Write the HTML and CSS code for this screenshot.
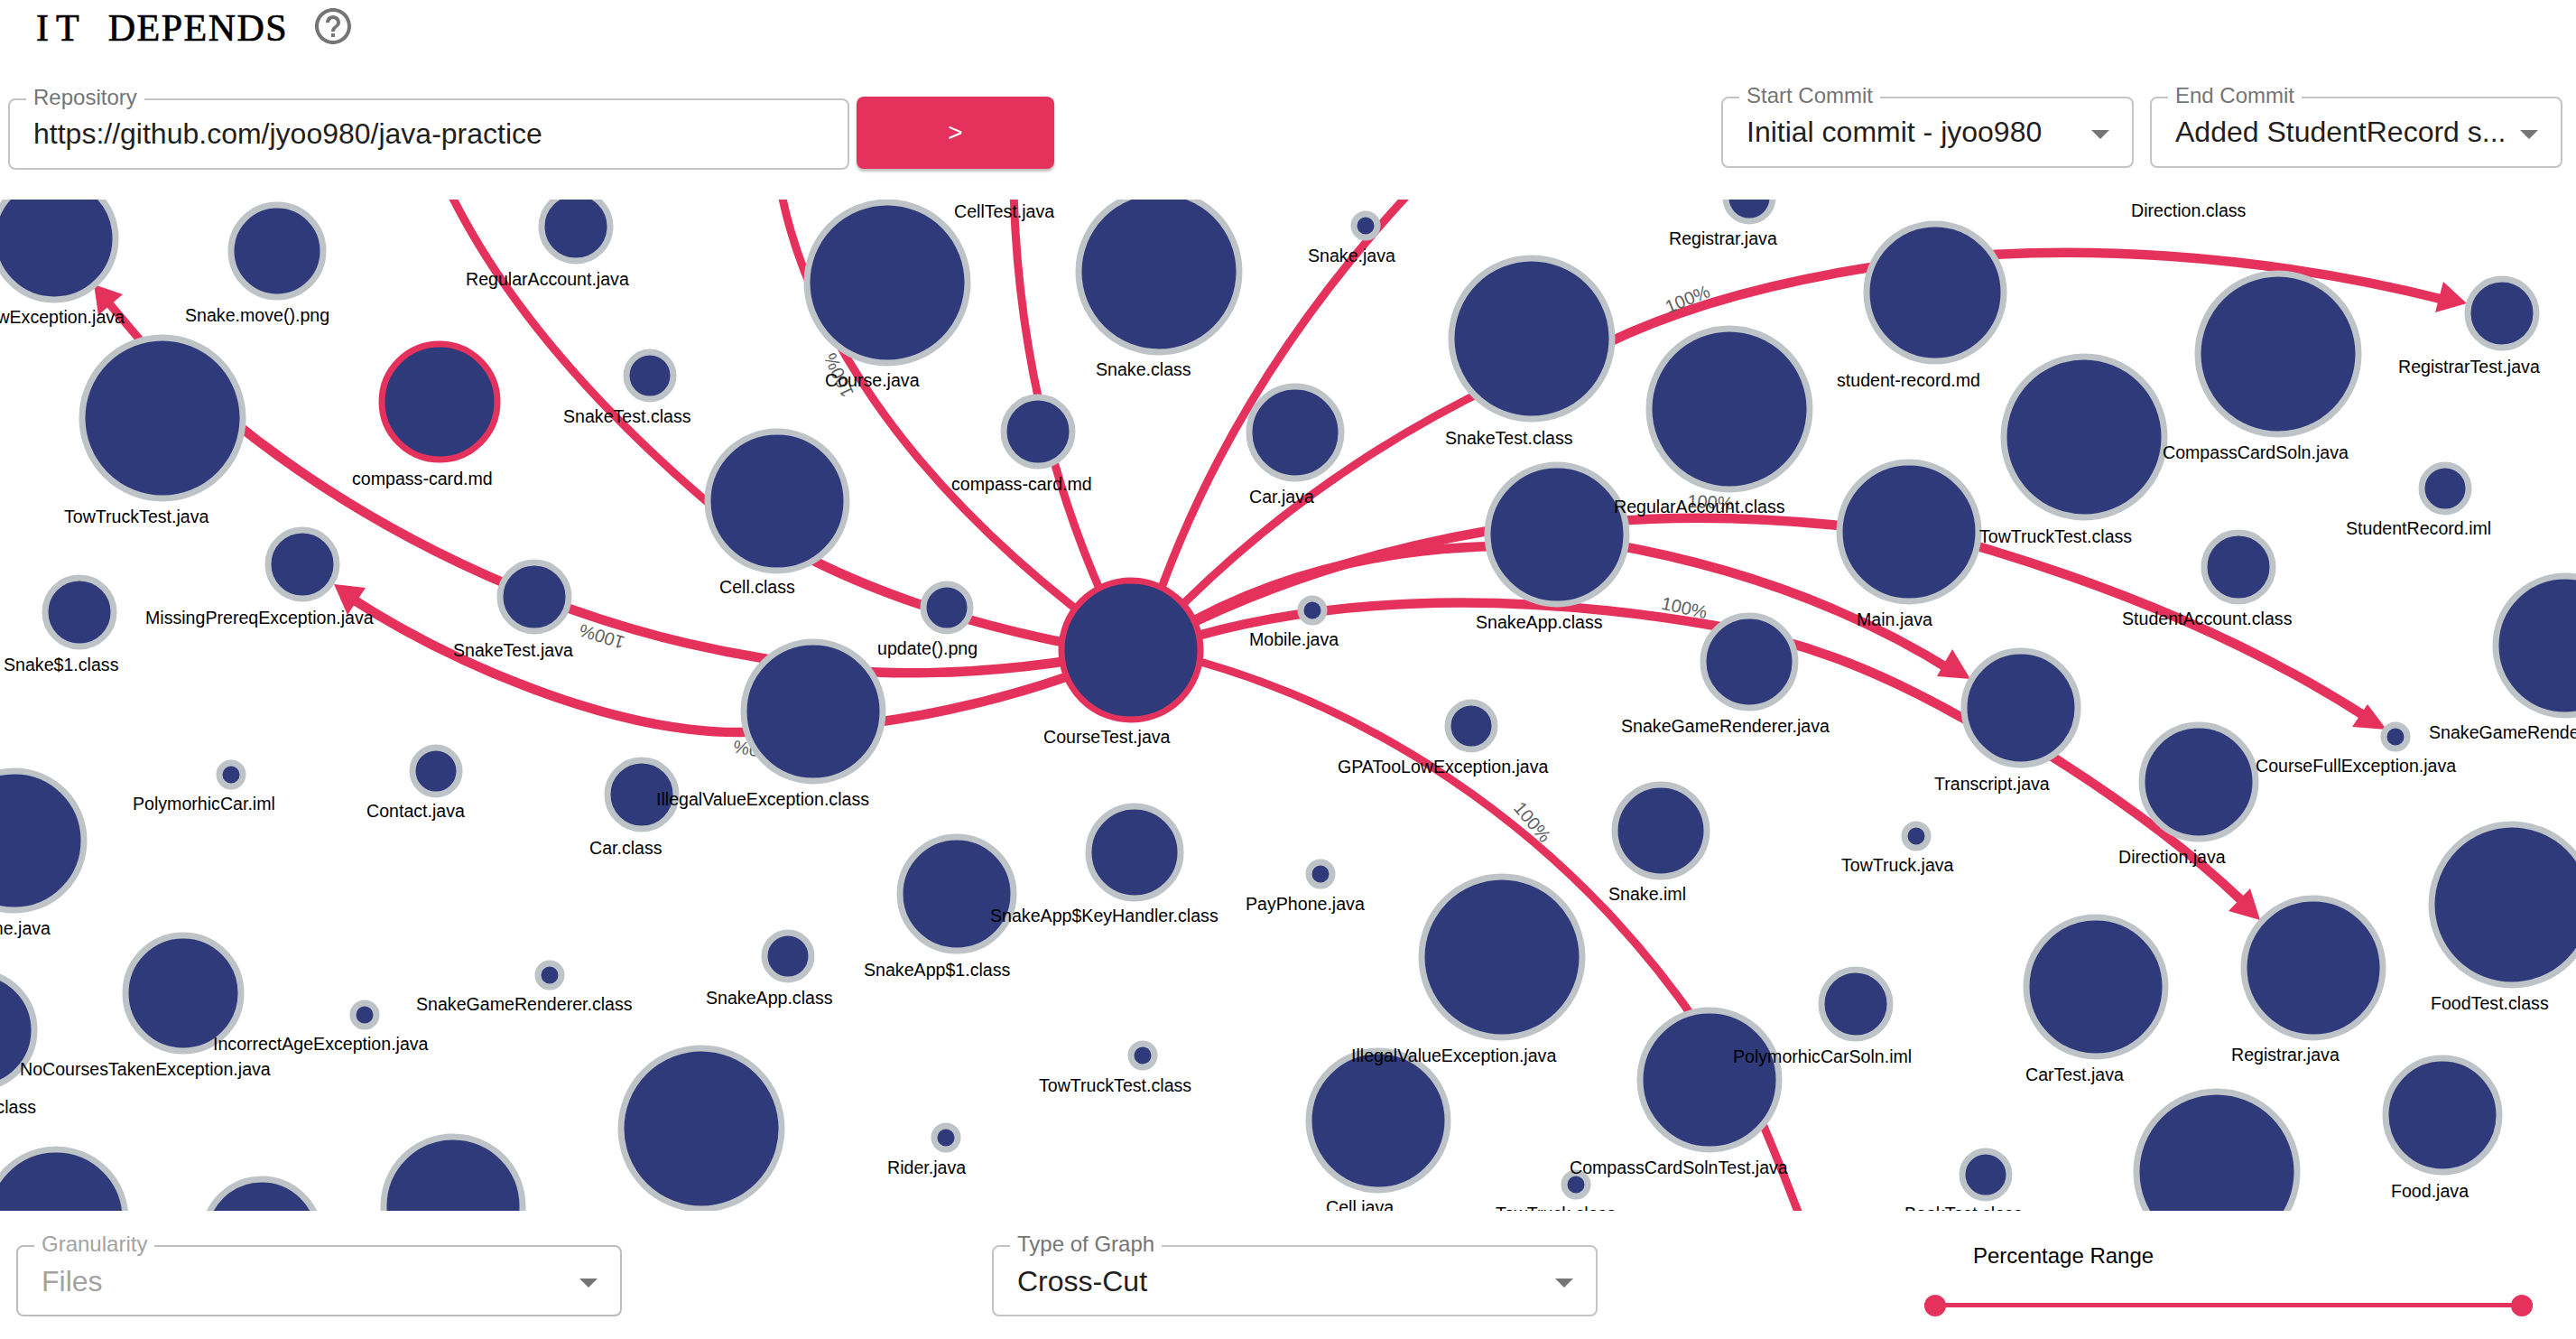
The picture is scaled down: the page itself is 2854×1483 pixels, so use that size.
FILE: index.html
```html
<!DOCTYPE html>
<html lang="en">

<head>
    <meta charset="UTF-8">
    <meta name="viewport" content="width=device-width, initial-scale=1.0">
    <title>It Depends</title>

    <link rel="stylesheet" href="styles.css">
</head>

<body>

    <div class="title-row">
        <h1 class="title"><span class="title-short">IT</span> DEPENDS</h1>
        <svg class="help-icon" viewBox="0 0 24 24">
            <path d="M11 18h2v-2h-2v2zm1-16C6.48 2 2 6.48 2 12s4.48 10 10 10 10-4.48 10-10S17.52 2 12 2zm0 18c-4.41 0-8-3.59-8-8s3.59-8 8-8 8 3.59 8 8-3.59 8-8 8zm0-14c-2.21 0-4 1.79-4 4h2c0-1.1.9-2 2-2s2 .9 2 2c0 2-3 1.75-3 5h2c0-2.25 3-2.5 3-5 0-2.21-1.79-4-4-4z"></path>
        </svg>
    </div>

    <div class="controls">
        <div class="repo-group">
            <div class="field repo-field">
                <label class="field-label">Repository</label>
                <input class="repo-input" type="text" value="https://github.com/jyoo980/java-practice">
            </div>
            <button class="go-button">&gt;</button>
        </div>
        <div class="commit-group">
            <div class="field commit-field">
                <label class="field-label">Start Commit</label>
                <span class="field-value">Initial commit - jyoo980</span>
                <span class="caret"></span>
            </div>
            <div class="field commit-field">
                <label class="field-label">End Commit</label>
                <span class="field-value">Added StudentRecord s...</span>
                <span class="caret"></span>
            </div>
        </div>
    </div>

    <div class="graph">
        <svg class="graph-svg" viewBox="0 221 2854 1120">
            <!-- links -->
            <path class="link" d="M175,400 L120,335"></path>
            <path class="link thick" d="M250,460 C 390,575 600,690 845,729 C 950,752 1090,752 1253,720"></path>
            <path class="link thick" d="M1253,722 C 1130,775 980,810 821,811 C 680,812 500,735 385,660"></path>
            <path class="link" d="M865,210 C 890,340 985,530 1253,720"></path>
            <path class="link" d="M497,210 Q 585,390 800,570"></path>
            <path class="link thick" d="M880,610 Q 1030,690 1253,725"></path>
            <path class="link" d="M1123,210 Q 1130,480 1245,710"></path>
            <path class="link" d="M1565,210 Q 1355,435 1270,700"></path>
            <path class="link" d="M1660,425 Q 1450,525 1290,690"></path>
            <path class="link thick" d="M1300,700 Q 1480,610 1700,580"></path>
            <path class="link thick" d="M1300,700 Q 1470,600 1700,605"></path>
            <path class="link thick" d="M1780,578 Q 1930,565 2120,592"></path>
            <path class="link thick" d="M2120,585 Q 2422,665 2623,795"></path>
            <path class="link thick" d="M1780,602 Q 2000,640 2166,745"></path>
            <path class="link thick" d="M1300,712 C 1450,665 1650,650 1900,693 C 2000,710 2090,745 2200,810"></path>
            <path class="link thick" d="M2261,830 Q 2397,915 2482,996"></path>
            <path class="link thick" d="M1770,385 Q 1900,320 2100,292"></path>
            <path class="link thick" d="M2140,288 C 2291,270 2502,280 2708,332"></path>
            <path class="link" d="M1300,725 C 1500,775 1725,905 1885,1140"></path>
            <path class="link" d="M1925,1180 Q 1965,1270 1995,1350"></path>

            <!-- arrow heads -->
            <polygon class="arrow" points="104,315 136,326 109,349"></polygon>
            <polygon class="arrow" points="370,647 405,651 385,681"></polygon>
            <polygon class="arrow" points="2183,752 2163,719 2146,749"></polygon>
            <polygon class="arrow" points="2644,808 2623,780 2606,805"></polygon>
            <polygon class="arrow" points="2504,1019 2493,984 2469,1009"></polygon>
            <polygon class="arrow" points="2733,336 2707,312 2698,346"></polygon>

            <!-- link percentages -->
            <text class="pct" x="1870" y="338" transform="rotate(-22 1870 332)">100%</text>
            <text class="pct" x="1866" y="680" transform="rotate(12 1866 674)">100%</text>
            <text class="pct" x="667" y="710" transform="rotate(197 667 704)">100%</text>
            <text class="pct" x="930" y="421" transform="rotate(245 930 415)">100%</text>
            <text class="pct" x="1895" y="563" transform="rotate(3 1895 557)">100%</text>
            <text class="pct" x="838" y="836" transform="rotate(190 838 830)">100%</text>
            <text class="pct" x="1697" y="917" transform="rotate(50 1697 911)">100%</text>

            <!-- nodes -->
            <circle class="node" cx="60" cy="264" r="68"></circle>
            <circle class="node" cx="307" cy="278" r="51"></circle>
            <circle class="node" cx="638" cy="251" r="38"></circle>
            <circle class="node" cx="180" cy="463" r="89"></circle>
            <circle class="node active" cx="487" cy="445" r="64"></circle>
            <circle class="node" cx="720" cy="416" r="26"></circle>
            <circle class="node" cx="861" cy="555" r="77"></circle>
            <circle class="node" cx="335" cy="625" r="38"></circle>
            <circle class="node" cx="592" cy="661" r="38"></circle>
            <circle class="node" cx="88" cy="678" r="38"></circle>
            <circle class="node" cx="983" cy="313" r="89"></circle>
            <circle class="node" cx="1284" cy="301" r="89"></circle>
            <circle class="node" cx="1150" cy="478" r="38"></circle>
            <circle class="node" cx="1513" cy="250" r="13"></circle>
            <circle class="node" cx="1435" cy="479" r="51"></circle>
            <circle class="node" cx="1697" cy="375" r="89"></circle>
            <circle class="node" cx="1916" cy="453" r="89"></circle>
            <circle class="node" cx="1725" cy="592" r="77"></circle>
            <circle class="node" cx="1049" cy="673" r="26"></circle>
            <circle class="node" cx="1454" cy="676" r="13"></circle>
            <circle class="node active" cx="1253" cy="720" r="77"></circle>
            <circle class="node" cx="1938" cy="219" r="26"></circle>
            <circle class="node" cx="2144" cy="324" r="76"></circle>
            <circle class="node" cx="2524" cy="392" r="89"></circle>
            <circle class="node" cx="2309" cy="484" r="89"></circle>
            <circle class="node" cx="2115" cy="589" r="77"></circle>
            <circle class="node" cx="2772" cy="347" r="38"></circle>
            <circle class="node" cx="2709" cy="541" r="26"></circle>
            <circle class="node" cx="2480" cy="628" r="38"></circle>
            <circle class="node" cx="2842" cy="715" r="77"></circle>
            <circle class="node" cx="1938" cy="733" r="51"></circle>
            <circle class="node" cx="2239" cy="784" r="63"></circle>
            <circle class="node" cx="2654" cy="816" r="13"></circle>
            <circle class="node" cx="2436" cy="866" r="63"></circle>
            <circle class="node" cx="2783" cy="1002" r="89"></circle>
            <circle class="node" cx="2563" cy="1072" r="77"></circle>
            <circle class="node" cx="2322" cy="1093" r="77"></circle>
            <circle class="node" cx="2123" cy="926" r="13"></circle>
            <circle class="node" cx="2056" cy="1112" r="38"></circle>
            <circle class="node" cx="1894" cy="1196" r="77"></circle>
            <circle class="node" cx="2456" cy="1298" r="89"></circle>
            <circle class="node" cx="2706" cy="1235" r="63"></circle>
            <circle class="node" cx="2200" cy="1301" r="26"></circle>
            <circle class="node" cx="1630" cy="804" r="26"></circle>
            <circle class="node" cx="1840" cy="920" r="51"></circle>
            <circle class="node" cx="1257" cy="944" r="51"></circle>
            <circle class="node" cx="1060" cy="990" r="63"></circle>
            <circle class="node" cx="1463" cy="968" r="13"></circle>
            <circle class="node" cx="1664" cy="1060" r="89"></circle>
            <circle class="node" cx="1266" cy="1169" r="13"></circle>
            <circle class="node" cx="1048" cy="1260" r="13"></circle>
            <circle class="node" cx="1527" cy="1241" r="77"></circle>
            <circle class="node" cx="1746" cy="1312" r="13"></circle>
            <circle class="node" cx="901" cy="788" r="77"></circle>
            <circle class="node" cx="16" cy="931" r="77"></circle>
            <circle class="node" cx="256" cy="858" r="13"></circle>
            <circle class="node" cx="483" cy="854" r="26"></circle>
            <circle class="node" cx="711" cy="880" r="38"></circle>
            <circle class="node" cx="-26" cy="1141" r="64"></circle>
            <circle class="node" cx="203" cy="1100" r="64"></circle>
            <circle class="node" cx="404" cy="1124" r="13"></circle>
            <circle class="node" cx="609" cy="1080" r="13"></circle>
            <circle class="node" cx="873" cy="1059" r="26"></circle>
            <circle class="node" cx="777" cy="1250" r="89"></circle>
            <circle class="node" cx="62" cy="1350" r="77"></circle>
            <circle class="node" cx="290" cy="1370" r="64"></circle>
            <circle class="node" cx="502" cy="1336" r="77"></circle>

            <!-- node names -->
            <g transform="translate(0 1)">
                <text class="name end" x="138" y="357">TooLowException.java</text>
                <text class="name" x="205" y="355">Snake.move().png</text>
                <text class="name" x="516" y="315">RegularAccount.java</text>
                <text class="name" x="71" y="578">TowTruckTest.java</text>
                <text class="name" x="390" y="536">compass-card.md</text>
                <text class="name" x="624" y="467">SnakeTest.class</text>
                <text class="name" x="797" y="656">Cell.class</text>
                <text class="name" x="161" y="690">MissingPrereqException.java</text>
                <text class="name" x="502" y="726">SnakeTest.java</text>
                <text class="name" x="4" y="742">Snake$1.class</text>
                <text class="name" x="914" y="427">Course.java</text>
                <text class="name" x="1214" y="415">Snake.class</text>
                <text class="name" x="1057" y="240">CellTest.java</text>
                <text class="name" x="1054" y="542">compass-card.md</text>
                <text class="name" x="1449" y="289">Snake.java</text>
                <text class="name" x="1384" y="556">Car.java</text>
                <text class="name" x="1601" y="491">SnakeTest.class</text>
                <text class="name" x="1788" y="567">RegularAccount.class</text>
                <text class="name" x="1635" y="695">SnakeApp.class</text>
                <text class="name" x="972" y="724">update().png</text>
                <text class="name" x="1384" y="714">Mobile.java</text>
                <text class="name" x="1156" y="822">CourseTest.java</text>
                <text class="name" x="1849" y="270">Registrar.java</text>
                <text class="name" x="2361" y="239">Direction.class</text>
                <text class="name" x="2035" y="427">student-record.md</text>
                <text class="name" x="2396" y="507">CompassCardSoln.java</text>
                <text class="name" x="2193" y="600">TowTruckTest.class</text>
                <text class="name" x="2057" y="692">Main.java</text>
                <text class="name" x="2657" y="412">RegistrarTest.java</text>
                <text class="name" x="2599" y="591">StudentRecord.iml</text>
                <text class="name" x="2351" y="691">StudentAccount.class</text>
                <text class="name" x="1796" y="810">SnakeGameRenderer.java</text>
                <text class="name" x="2143" y="874">Transcript.java</text>
                <text class="name" x="2499" y="854">CourseFullException.java</text>
                <text class="name" x="2691" y="817">SnakeGameRenderer$1.class</text>
                <text class="name" x="2347" y="955">Direction.java</text>
                <text class="name" x="2693" y="1117">FoodTest.class</text>
                <text class="name" x="2472" y="1174">Registrar.java</text>
                <text class="name" x="2244" y="1196">CarTest.java</text>
                <text class="name" x="2040" y="964">TowTruck.java</text>
                <text class="name" x="1920" y="1176">PolymorhicCarSoln.iml</text>
                <text class="name" x="1739" y="1299">CompassCardSolnTest.java</text>
                <text class="name" x="2649" y="1325">Food.java</text>
                <text class="name" x="2110" y="1350">BookTest.class</text>
                <text class="name" x="1482" y="855">GPATooLowException.java</text>
                <text class="name" x="1782" y="996">Snake.iml</text>
                <text class="name" x="1097" y="1020">SnakeApp$KeyHandler.class</text>
                <text class="name" x="957" y="1080">SnakeApp$1.class</text>
                <text class="name" x="1380" y="1007">PayPhone.java</text>
                <text class="name" x="1497" y="1175">IllegalValueException.java</text>
                <text class="name" x="1151" y="1208">TowTruckTest.class</text>
                <text class="name" x="983" y="1299">Rider.java</text>
                <text class="name" x="1469" y="1343">Cell.java</text>
                <text class="name" x="1657" y="1350">TowTruck.class</text>
                <text class="name" x="727" y="891">IllegalValueException.class</text>
                <text class="name end" x="56" y="1034">Phone.java</text>
                <text class="name" x="147" y="896">PolymorhicCar.iml</text>
                <text class="name" x="406" y="904">Contact.java</text>
                <text class="name" x="653" y="945">Car.class</text>
                <text class="name" x="22" y="1190">NoCoursesTakenException.java</text>
                <text class="name end" x="40" y="1232">Rider.class</text>
                <text class="name" x="236" y="1162">IncorrectAgeException.java</text>
                <text class="name" x="461" y="1118">SnakeGameRenderer.class</text>
                <text class="name" x="782" y="1111">SnakeApp.class</text>
            </g>
        </svg>
    </div>

    <div class="bottom-bar">
        <div class="field option-field disabled">
            <label class="field-label">Granularity</label>
            <span class="field-value">Files</span>
            <span class="caret"></span>
        </div>
        <div class="field option-field">
            <label class="field-label">Type of Graph</label>
            <span class="field-value">Cross-Cut</span>
            <span class="caret"></span>
        </div>
        <div class="range">
            <div class="range-label">Percentage Range</div>
            <div class="range-track">
                <span class="range-thumb"></span>
                <span class="range-thumb"></span>
            </div>
        </div>
    </div>

</body>

</html>
```

FILE: styles.css
```css
body {
    margin: 0;
    background-color: white;
    font-family: "Liberation Sans", Arial, sans-serif;
    overflow: hidden;
}

.title-row {
    display: flex;
    align-items: center;
    height: 58px;
    padding-left: 40px;
}

.title {
    margin: 4px 0 0;
    font-family: "Liberation Serif", "Times New Roman", serif;
    font-size: 42px;
    font-weight: normal;
    letter-spacing: 1.5px;
    word-spacing: 12px;
    line-height: 50px;
    -webkit-text-stroke: 0.7px black;
    color: black;
}

.title-short {
    letter-spacing: 8px;
}

.help-icon {
    width: 48px;
    height: 48px;
    margin-left: 26px;
    fill: #757575;
}

.controls {
    display: flex;
    justify-content: space-between;
    align-items: flex-start;
    height: 114px;
    margin-top: 49px;
}

.repo-group {
    display: flex;
    padding-left: 9px;
}

.commit-group {
    display: flex;
    gap: 18px;
    padding-right: 15px;
}

.field {
    position: relative;
    box-sizing: border-box;
    display: flex;
    align-items: center;
    height: 79px;
    padding-left: 26px;
    border: 2px solid #c4c4c4;
    border-radius: 8px;
}

.field-label {
    position: absolute;
    top: -17px;
    left: 18px;
    padding: 0 8px;
    background-color: white;
    font-size: 24px;
    line-height: 28px;
    color: #757575;
}

.field-value {
    font-size: 32px;
    color: #1f1f1f;
    white-space: nowrap;
}

.caret {
    position: absolute;
    top: 35px;
    right: 25px;
    border-left: 10px solid transparent;
    border-right: 10px solid transparent;
    border-top: 10px solid #757575;
}

.repo-field {
    width: 932px;
    margin-top: 2px;
}

.repo-input {
    width: 100%;
    padding: 0;
    border: none;
    outline: none;
    font-family: inherit;
    font-size: 32px;
    color: #1f1f1f;
}

.go-button {
    width: 219px;
    height: 80px;
    margin-left: 8px;
    border: none;
    border-radius: 8px;
    background-color: #e5325c;
    color: white;
    font-family: inherit;
    font-size: 28px;
    box-shadow: 0 3px 3px rgba(0, 0, 0, 0.25);
    cursor: pointer;
}

.commit-field {
    width: 457px;
}

.graph {
    height: 1120px;
}

.graph-svg {
    display: block;
    width: 2854px;
    height: 1120px;
}

.link {
    fill: none;
    stroke: #e5325c;
    stroke-width: 9;
}

.link.thick {
    stroke-width: 10.5;
}

.arrow {
    fill: #e5325c;
}

.pct {
    font-size: 20px;
    fill: #5f5f5f;
    text-anchor: middle;
}

.node {
    fill: #2e3a7a;
    stroke: #bdc3c7;
    stroke-width: 7;
}

.node.active {
    stroke: #e5325c;
}

.name {
    font-size: 19.6px;
    fill: black;
}

.name.end {
    text-anchor: end;
}

.bottom-bar {
    display: flex;
    padding-top: 38px;
    padding-left: 18px;
}

.option-field {
    width: 671px;
    margin-right: 410px;
}

.option-field:nth-child(2) {
    margin-right: 362px;
}

.option-field .field-value {
    position: relative;
    top: 1px;
}

.disabled {
    border-color: #bdbdbd;
}

.disabled .field-label,
.disabled .field-value {
    color: #a3a3a3;
}

.range {
    width: 674px;
}

.range-label {
    margin-top: -2px;
    margin-left: 54px;
    font-size: 24px;
    line-height: 28px;
    color: black;
}

.range-track {
    display: flex;
    justify-content: space-between;
    align-items: center;
    height: 5px;
    margin-top: 38px;
    background-color: #e5325c;
}

.range-thumb {
    width: 24px;
    height: 24px;
    border-radius: 50%;
    background-color: #e5325c;
}
```
